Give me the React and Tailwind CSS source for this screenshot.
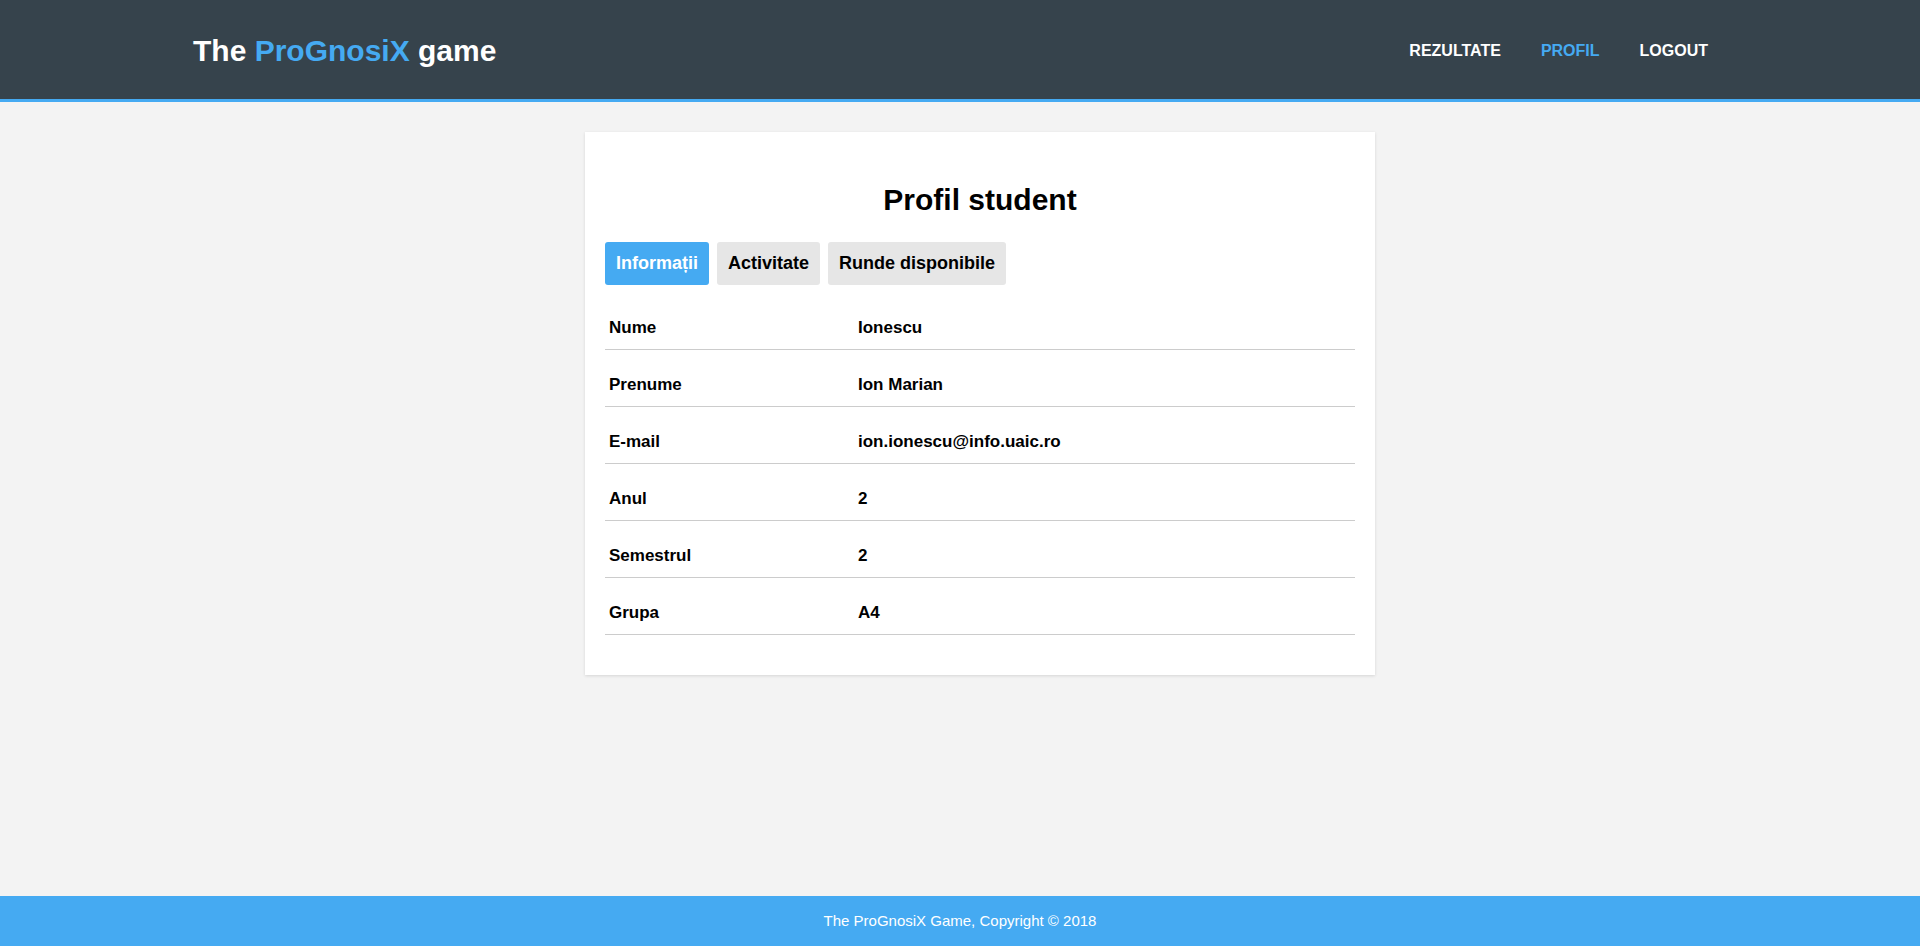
import React, { useState } from "react";

const rows = [
  { label: "Nume", value: "Ionescu" },
  { label: "Prenume", value: "Ion Marian" },
  { label: "E-mail", value: "ion.ionescu@info.uaic.ro" },
  { label: "Anul", value: "2" },
  { label: "Semestrul", value: "2" },
  { label: "Grupa", value: "A4" },
];

const tabs = ["Informații", "Activitate", "Runde disponibile"];

const NavBar = () => (
  <header className="bg-[#36434c] border-b-[3px] border-[#45aaf2]">
    <div className="w-[80%] mx-auto h-[99px] flex items-center justify-between">
      <h1 className="text-[30px] font-bold text-white leading-none pt-[2px] pl-[1px]">
        The <span className="text-[#45aaf2]">ProGnosiX</span> game
      </h1>
      <nav className="flex items-center text-[16px] font-bold uppercase pt-[2px]">
        <a className="px-5 text-white" href="#">Rezultate</a>
        <a className="px-5 text-[#45aaf2]" href="#">Profil</a>
        <a className="px-5 text-white" href="#">Logout</a>
      </nav>
    </div>
  </header>
);

export default function App() {
  const [active, setActive] = useState(0);

  return (
    <div className="min-h-screen flex flex-col bg-[#f3f3f3] font-['Liberation_Sans',Arial,sans-serif] text-black">
      <NavBar />

      <main className="flex-1 pt-[30px]">
        <div className="w-[790px] ml-[585px] bg-white shadow-[0_1px_3px_rgba(0,0,0,0.12)] px-5 pt-[51px] pb-[40px]">
          <h2 className="text-[30px] font-bold text-center leading-[34px]">Profil student</h2>

          <div className="flex gap-2 mt-[25px]">
            {tabs.map((t, i) => (
              <button
                key={t}
                onClick={() => setActive(i)}
                className={
                  "h-[43px] px-[11px] rounded-[3px] text-[18px] font-bold leading-[21px] " +
                  (active === i ? "bg-[#45aaf2] text-white" : "bg-[#e6e6e6] text-black")
                }
              >
                {t}
              </button>
            ))}
          </div>

          <table className="w-full mt-[8px] border-collapse text-[17px] font-bold">
            <tbody>
              {rows.map((r) => (
                <tr key={r.label} className="border-b border-[#cccccc]">
                  <td className="w-[253px] pl-[4px] pt-[25px] pb-[11px] leading-[20px]">{r.label}</td>
                  <td className="pt-[25px] pb-[11px] leading-[20px]">{r.value}</td>
                </tr>
              ))}
            </tbody>
          </table>
        </div>
      </main>

      <footer className="bg-[#45aaf2] h-[50px] flex items-center justify-center text-white text-[15px]">
        The ProGnosiX Game, Copyright © 2018
      </footer>
    </div>
  );
}
